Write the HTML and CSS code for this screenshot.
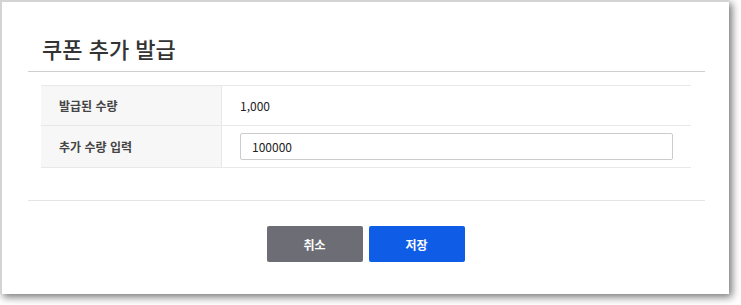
FILE: index.html
```html
<!DOCTYPE html>
<html lang="ko">
<head>
    <meta charset="UTF-8">
    <title>쿠폰 추가 발급</title>
    <link rel="stylesheet" href="styles.css">
</head>
<body>
    <div class="modal">
        <div class="modal-inner">
            <div class="modal-header">
                <h2>쿠폰 추가 발급</h2>
            </div>

            <table class="form-table">
                <tr class="row-info">
                    <th>발급된 수량</th>
                    <td>1,000</td>
                </tr>
                <tr class="row-input">
                    <th>추가 수량 입력</th>
                    <td><input type="text" class="text-input" value="100000"></td>
                </tr>
            </table>

            <div class="modal-footer">
                <button class="btn btn-cancel">취소</button>
                <button class="btn btn-save">저장</button>
            </div>
        </div>
    </div>
</body>
</html>
```

FILE: styles.css
```css
html {
    background: #fff;
}
body {
    margin: 0;
    padding-bottom: 11px;
    font-family: "Noto Sans CJK KR", "Noto Sans", sans-serif;
    color: #333;
}
.modal {
    box-sizing: border-box;
    width: 729px;
    height: 294px;
    overflow: hidden;
    background: #fff;
    border-top: 2px solid #d4d4d4;
    border-left: 2px solid #d4d4d4;
    box-shadow: 3px 3px 8px rgba(0, 0, 0, 0.55);
}
.modal-inner {
    margin: 0 24px 0 26px;
}
.modal-header {
    padding: 30px 14px 7px;
    border-bottom: 1px solid #cfcfcf;
}
.modal-header h2 {
    margin: 0;
    font-size: 22px;
    line-height: 32px;
    font-weight: 500;
    color: #333;
}
.form-table {
    margin: 13px 14px 0 13px;
    width: 650px;
    border-collapse: collapse;
    font-size: 12px;
}
.form-table th,
.form-table td {
    border-top: 1px solid #e8e8e8;
    border-bottom: 1px solid #e8e8e8;
    text-align: left;
    padding: 0;
}
.form-table th {
    width: 162px;
    padding-left: 18px;
    background: #f7f7f7;
    border-right: 1px solid #e8e8e8;
    font-weight: 700;
    color: #444;
}
.form-table td {
    padding-left: 18px;
    color: #222;
}
.row-info th,
.row-info td {
    height: 39px;
}
.row-input th,
.row-input td {
    height: 41px;
}
.text-input {
    box-sizing: border-box;
    width: 433px;
    height: 27px;
    border: 1px solid #cccccc;
    border-radius: 2px;
    padding: 0 11px;
    font-family: inherit;
    font-size: 12px;
    color: #222;
    outline: none;
}
.modal-footer {
    margin-top: 32px;
    border-top: 1px solid #e5e5e5;
    padding: 25px 2px 0 0;
    display: flex;
    justify-content: center;
    gap: 6px;
}
.btn {
    width: 96px;
    height: 36px;
    border: none;
    border-radius: 2px;
    color: #fff;
    font-family: inherit;
    font-size: 12px;
    font-weight: 700;
    cursor: pointer;
}
.btn-cancel {
    background: #6d6e75;
}
.btn-save {
    background: #0f5de6;
}
```
